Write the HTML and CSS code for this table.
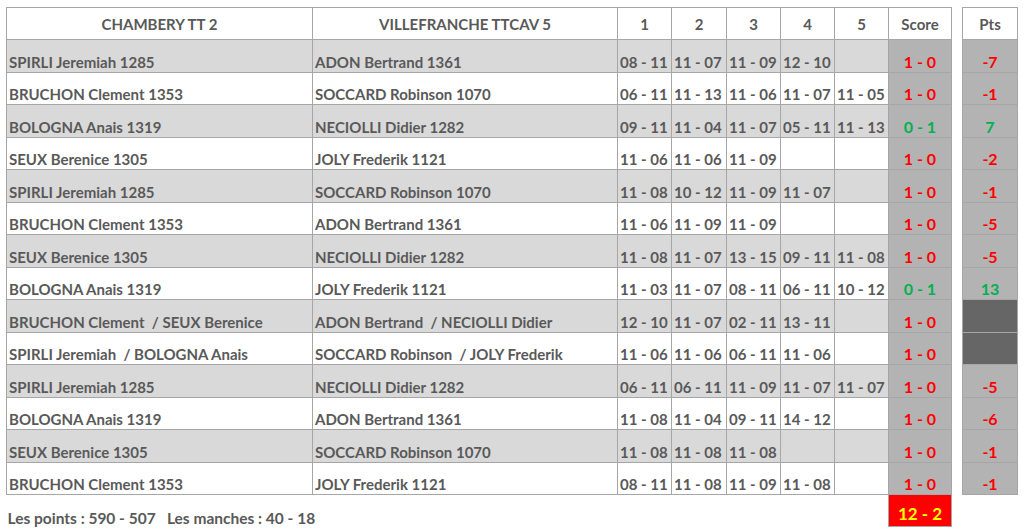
FILE: index.html
```html
<!DOCTYPE html>
<html lang="fr">
<head>
<meta charset="utf-8">
<title>Rencontre</title>
<link rel="stylesheet" href="styles.css">
</head>
<body>
<div class="page">
  <table class="match">
    <colgroup>
      <col class="c-name"><col class="c-name2">
      <col class="c-set"><col class="c-set2"><col class="c-set"><col class="c-set"><col class="c-set">
      <col class="c-score">
    </colgroup>
    <thead>
      <tr class="head">
        <th>CHAMBERY TT 2</th><th>VILLEFRANCHE TTCAV 5</th>
        <th>1</th><th>2</th><th>3</th><th>4</th><th>5</th><th>Score</th>
      </tr>
    </thead>
    <tbody>
      <tr class="g"><td>SPIRLI Jeremiah 1285</td><td>ADON Bertrand 1361</td><td class="s">08 - 11</td><td class="s">11 - 07</td><td class="s">11 - 09</td><td class="s">12 - 10</td><td class="s"></td><td class="sc red">1 - 0</td></tr>
      <tr><td>BRUCHON Clement 1353</td><td>SOCCARD Robinson 1070</td><td class="s">06 - 11</td><td class="s">11 - 13</td><td class="s">11 - 06</td><td class="s">11 - 07</td><td class="s">11 - 05</td><td class="sc red">1 - 0</td></tr>
      <tr class="g"><td>BOLOGNA Anais 1319</td><td>NECIOLLI Didier 1282</td><td class="s">09 - 11</td><td class="s">11 - 04</td><td class="s">11 - 07</td><td class="s">05 - 11</td><td class="s">11 - 13</td><td class="sc green">0 - 1</td></tr>
      <tr><td>SEUX Berenice 1305</td><td>JOLY Frederik 1121</td><td class="s">11 - 06</td><td class="s">11 - 06</td><td class="s">11 - 09</td><td class="s"></td><td class="s"></td><td class="sc red">1 - 0</td></tr>
      <tr class="g"><td>SPIRLI Jeremiah 1285</td><td>SOCCARD Robinson 1070</td><td class="s">11 - 08</td><td class="s">10 - 12</td><td class="s">11 - 09</td><td class="s">11 - 07</td><td class="s"></td><td class="sc red">1 - 0</td></tr>
      <tr><td>BRUCHON Clement 1353</td><td>ADON Bertrand 1361</td><td class="s">11 - 06</td><td class="s">11 - 09</td><td class="s">11 - 09</td><td class="s"></td><td class="s"></td><td class="sc red">1 - 0</td></tr>
      <tr class="g"><td>SEUX Berenice 1305</td><td>NECIOLLI Didier 1282</td><td class="s">11 - 08</td><td class="s">11 - 07</td><td class="s">13 - 15</td><td class="s">09 - 11</td><td class="s">11 - 08</td><td class="sc red">1 - 0</td></tr>
      <tr><td>BOLOGNA Anais 1319</td><td>JOLY Frederik 1121</td><td class="s">11 - 03</td><td class="s">11 - 07</td><td class="s">08 - 11</td><td class="s">06 - 11</td><td class="s">10 - 12</td><td class="sc green">0 - 1</td></tr>
      <tr class="g"><td>BRUCHON Clement&nbsp; / SEUX Berenice</td><td>ADON Bertrand&nbsp; / NECIOLLI Didier</td><td class="s">12 - 10</td><td class="s">11 - 07</td><td class="s">02 - 11</td><td class="s">13 - 11</td><td class="s"></td><td class="sc red">1 - 0</td></tr>
      <tr><td>SPIRLI Jeremiah&nbsp; / BOLOGNA Anais</td><td>SOCCARD Robinson&nbsp; / JOLY Frederik</td><td class="s">11 - 06</td><td class="s">11 - 06</td><td class="s">06 - 11</td><td class="s">11 - 06</td><td class="s"></td><td class="sc red">1 - 0</td></tr>
      <tr class="g"><td>SPIRLI Jeremiah 1285</td><td>NECIOLLI Didier 1282</td><td class="s">06 - 11</td><td class="s">06 - 11</td><td class="s">11 - 09</td><td class="s">11 - 07</td><td class="s">11 - 07</td><td class="sc red">1 - 0</td></tr>
      <tr><td>BOLOGNA Anais 1319</td><td>ADON Bertrand 1361</td><td class="s">11 - 08</td><td class="s">11 - 04</td><td class="s">09 - 11</td><td class="s">14 - 12</td><td class="s"></td><td class="sc red">1 - 0</td></tr>
      <tr class="g"><td>SEUX Berenice 1305</td><td>SOCCARD Robinson 1070</td><td class="s">11 - 08</td><td class="s">11 - 08</td><td class="s">11 - 08</td><td class="s"></td><td class="s"></td><td class="sc red">1 - 0</td></tr>
      <tr><td>BRUCHON Clement 1353</td><td>JOLY Frederik 1121</td><td class="s">08 - 11</td><td class="s">11 - 08</td><td class="s">11 - 09</td><td class="s">11 - 08</td><td class="s"></td><td class="sc red">1 - 0</td></tr>
      <tr class="foot">
        <td colspan="7" class="summary">Les points : 590 - 507&nbsp;&nbsp;&nbsp;Les manches : 40 - 18</td>
        <td class="total">12 - 2</td>
      </tr>
    </tbody>
  </table>

  <table class="pts">
    <thead>
      <tr class="head"><th>Pts</th></tr>
    </thead>
    <tbody>
      <tr><td class="red">-7</td></tr>
      <tr><td class="red">-1</td></tr>
      <tr><td class="green">7</td></tr>
      <tr><td class="red">-2</td></tr>
      <tr><td class="red">-1</td></tr>
      <tr><td class="red">-5</td></tr>
      <tr><td class="red">-5</td></tr>
      <tr><td class="green">13</td></tr>
      <tr><td class="dark"></td></tr>
      <tr><td class="dark"></td></tr>
      <tr><td class="red">-5</td></tr>
      <tr><td class="red">-6</td></tr>
      <tr><td class="red">-1</td></tr>
      <tr><td class="red">-1</td></tr>
    </tbody>
  </table>
</div>
</body>
</html>
```

FILE: styles.css
```css
html, body {
  margin: 0;
  padding: 0;
  background: #ffffff;
}

body {
  font-family: Lato, "Open Sans", "Liberation Sans", sans-serif;
  font-weight: 700;
  font-size: 15px;
  color: #595959;
}

.page {
  display: flex;
  align-items: flex-start;
  gap: 10px;
  padding: 7px 0 0 6px;
}

table {
  border-collapse: collapse;
  table-layout: fixed;
}

.match {
  width: 946px;
}

.c-name { width: 306px; }
.c-name2 { width: 305px; }
.c-set { width: 54px; }
.c-set2 { width: 55px; }
.c-score { width: 63px; }

.pts {
  width: 56px;
}

th, td {
  border: 1px solid #a6a6a6;
  padding: 0 2px 1px 2px;
  white-space: nowrap;
  overflow: hidden;
}

.head th {
  height: 31px;
  padding: 0;
  text-align: center;
  vertical-align: middle;
  font-weight: 700;
  background: #ffffff;
}

tbody tr {
  height: 32.5px;
}

td {
  vertical-align: bottom;
  line-height: 18px;
  text-align: left;
}

tr.g td {
  background: #d9d9d9;
}

td.s {
  padding-left: 2px;
  padding-right: 0;
}

td.sc,
.pts td {
  background: #b3b3b3;
  text-align: center;
  font-size: 16px;
}

tr.g td.sc {
  background: #b3b3b3;
}

.red { color: #ff0000; }
.green { color: #00b050; }

.pts td.dark {
  background: #666666;
}

.foot {
  height: 32px;
}

.foot td.summary {
  border: none;
  padding-left: 1px;
  padding-bottom: 0;
  font-size: 15.5px;
}

.foot td.total {
  background: #ff0000;
  color: #ffff00;
  text-align: center;
  font-size: 17px;
  padding-bottom: 3px;
}
```
